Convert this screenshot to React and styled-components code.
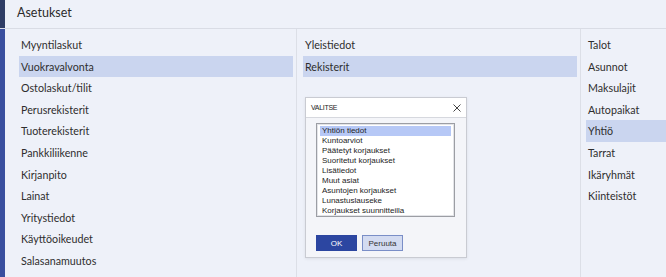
import React from "react";
import styled, { createGlobalStyle } from "styled-components";

const GlobalStyle = createGlobalStyle`
  html, body {
    margin: 0;
    padding: 0;
    background: #eef1f9;
    font-family: Lato, "Liberation Sans", sans-serif;
    color: #333;
    overflow: hidden;
  }
`;

const Page = styled.div`
  position: relative;
  width: 666px;
  height: 277px;
  display: grid;
  grid-template-rows: 29px 1fr;
`;

const Band = styled.div`
  display: flex;
  min-height: 0;
  border-bottom: ${(p) => (p.$line ? "1px solid #d9dce5" : "none")};
`;

const Edge = styled.div`
  width: 5px;
  flex: none;
  background: ${(p) => (p.$dark ? "#2f3d66" : "#3a4f9f")};
`;

const Title = styled.h1`
  margin: 0;
  padding: 0 0 0 12px;
  font-size: 12.5px;
  font-weight: 400;
  line-height: 26px;
  color: #2b2b2b;
`;

const Columns = styled.div`
  flex: 1;
  display: grid;
  grid-template-columns: 292px 284px 1fr;
`;

const Column = styled.ul`
  margin: 0;
  list-style: none;
  padding: 5px ${(p) => p.$right}px 0 ${(p) => p.$left}px;
  border-right: ${(p) => (p.$last ? "none" : "1px solid #dcdfe7")};
`;

const Item = styled.li`
  height: 21.6px;
  line-height: 21.6px;
  padding-left: 2px;
  font-size: 10.7px;
  color: #2e2e2e;
  background: ${(p) => (p.$active ? "#cad5ef" : "transparent")};
`;

const Dialog = styled.div`
  position: absolute;
  left: 305px;
  top: 97px;
  width: 160px;
  height: 159px;
  background: #f4f5f9;
  border: 1px solid #c9cbd2;
  box-shadow: 0 1px 3px rgba(0, 0, 0, 0.08);
  display: flex;
  flex-direction: column;
  font-family: "Liberation Sans", Arial, sans-serif;
`;

const DialogBar = styled.div`
  height: 19px;
  flex: none;
  display: flex;
  align-items: center;
  justify-content: space-between;
  padding: 0 5px 0 5px;
  background: #ffffff;
  border-bottom: 1px solid #d6d8de;
`;

const DialogTitle = styled.span`
  font-size: 7px;
  letter-spacing: -0.3px;
  color: #222;
`;

const DialogBody = styled.div`
  padding: 5px 11px 0 10px;
  display: flex;
  flex-direction: column;
  gap: 18px;
`;

const ListBox = styled.ul`
  margin: 0;
  list-style: none;
  height: 94px;
  padding: 2px 3px 0 3px;
  box-sizing: border-box;
  background: #fff;
  border: 1px solid #9c9ea4;
  box-shadow: inset 0 0 0 1px #e3e4e8;
`;

const Option = styled.li`
  height: 10px;
  line-height: 10px;
  padding-left: 2px;
  font-size: 8px;
  color: #1d1d1d;
  background: ${(p) => (p.$active ? "#b6c8f6" : "transparent")};
`;

const Buttons = styled.div`
  display: flex;
  gap: 5px;
`;

const Button = styled.button`
  width: 41px;
  height: 16px;
  padding: 0;
  font-family: "Liberation Sans", Arial, sans-serif;
  font-size: 8px;
  border: 1px solid ${(p) => (p.$primary ? "#2b45a0" : "#7a8ec7")};
  background: ${(p) => (p.$primary ? "#2c46a1" : "#d3dbf1")};
  color: ${(p) => (p.$primary ? "#fff" : "#333")};
`;

const CloseIcon = () => (
  <svg width="8" height="8" viewBox="0 0 8 8">
    <path d="M0.5 0.5 L7.5 7.5 M7.5 0.5 L0.5 7.5" stroke="#444" strokeWidth="1" fill="none" />
  </svg>
);

const mainMenu = [
  "Myyntilaskut",
  "Vuokravalvonta",
  "Ostolaskut/tilit",
  "Perusrekisterit",
  "Tuoterekisterit",
  "Pankkiliikenne",
  "Kirjanpito",
  "Lainat",
  "Yritystiedot",
  "Käyttöoikeudet",
  "Salasanamuutos",
];

const subMenu = ["Yleistiedot", "Rekisterit"];

const registers = [
  "Talot",
  "Asunnot",
  "Maksulajit",
  "Autopaikat",
  "Yhtiö",
  "Tarrat",
  "Ikäryhmät",
  "Kiinteistöt",
];

const choices = [
  "Yhtiön tiedot",
  "Kuntoarviot",
  "Päätetyt korjaukset",
  "Suoritetut korjaukset",
  "Lisätiedot",
  "Muut asiat",
  "Asuntojen korjaukset",
  "Lunastuslauseke",
  "Korjaukset suunnitteilla",
];

const App = () => {
  return (
    <>
      <GlobalStyle />
      <Page>
        <Band $line>
          <Edge $dark />
          <Title>Asetukset</Title>
        </Band>
        <Band>
          <Edge />
          <Columns>
            <Column $left={14} $right={3}>
              {mainMenu.map((name) => (
                <Item key={name} $active={name === "Vuokravalvonta"}>
                  {name}
                </Item>
              ))}
            </Column>
            <Column $left={6} $right={3}>
              {subMenu.map((name) => (
                <Item key={name} $active={name === "Rekisterit"}>
                  {name}
                </Item>
              ))}
            </Column>
            <Column $left={5} $right={0} $last>
              {registers.map((name) => (
                <Item key={name} $active={name === "Yhtiö"}>
                  {name}
                </Item>
              ))}
            </Column>
          </Columns>
        </Band>

        <Dialog>
          <DialogBar>
            <DialogTitle>VALITSE</DialogTitle>
            <CloseIcon />
          </DialogBar>
          <DialogBody>
            <ListBox>
              {choices.map((c, i) => (
                <Option key={c} $active={i === 0}>
                  {c}
                </Option>
              ))}
            </ListBox>
            <Buttons>
              <Button $primary>OK</Button>
              <Button>Peruuta</Button>
            </Buttons>
          </DialogBody>
        </Dialog>
      </Page>
    </>
  );
};

export default App;
